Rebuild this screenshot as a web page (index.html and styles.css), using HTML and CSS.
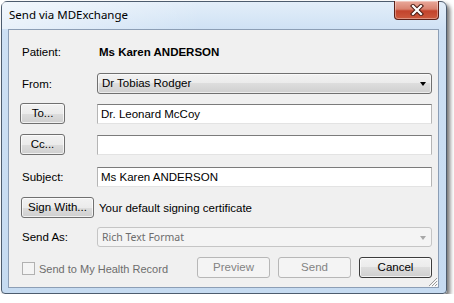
FILE: index.html
```html
<!DOCTYPE html>
<html lang="en">
<head>
  <meta charset="UTF-8">
  <title>Send via MDExchange</title>
  <link rel="stylesheet" href="styles.css">
</head>
<body>
  <div class="window">
    <div class="titlebar">
      <span class="title">Send via MDExchange</span>
      <div class="close">
        <svg width="14" height="12" viewBox="0 0 14 12">
          <path d="M3 2 L11 10 M11 2 L3 10" stroke="#4a1c14" stroke-width="4.2" stroke-linecap="square"/>
          <path d="M3 2 L11 10 M11 2 L3 10" stroke="#fff" stroke-width="2.2" stroke-linecap="square"/>
        </svg>
      </div>
    </div>

    <div class="client">
      <div class="row row-patient">
        <span class="label">Patient:</span>
        <span class="patient">Ms Karen ANDERSON</span>
      </div>

      <div class="row row-from">
        <span class="label">From:</span>
        <div class="combo">Dr Tobias Rodger<span class="arrow"></span></div>
      </div>

      <div class="row row-to">
        <div class="cell"><div class="btn btn-small">To...</div></div>
        <div class="field">Dr. Leonard McCoy</div>
      </div>

      <div class="row row-cc">
        <div class="cell"><div class="btn btn-small">Cc...</div></div>
        <div class="field"></div>
      </div>

      <div class="row row-subject">
        <span class="label">Subject:</span>
        <div class="field">Ms Karen ANDERSON</div>
      </div>

      <div class="row row-sign">
        <div class="cell"><div class="btn btn-sign">Sign With...</div></div>
        <span class="cert">Your default signing certificate</span>
      </div>

      <div class="row row-sendas">
        <span class="label">Send As:</span>
        <div class="combo combo-disabled">Rich Text Format<span class="arrow"></span></div>
      </div>

      <div class="row row-bottom">
        <div class="check">
          <span class="box"></span>
          <span>Send to My Health Record</span>
        </div>
        <div class="actions">
          <div class="btn btn-wide btn-disabled">Preview</div>
          <div class="btn btn-wide btn-disabled">Send</div>
          <div class="btn btn-wide btn-default">Cancel</div>
        </div>
      </div>

      <svg class="grip" width="10" height="10" viewBox="0 0 10 10">
        <path d="M9 1 L1 9 M9 4 L4 9 M9 7 L7 9" stroke="#9a9a9a" stroke-width="1"/>
        <path d="M10 2 L2 10 M10 5 L5 10 M10 8 L8 10" stroke="#fff" stroke-width="1"/>
      </svg>
    </div>
  </div>
</body>
</html>
```

FILE: styles.css
```css
body {
  margin: 0;
  background: #fff;
  font-family: "Liberation Sans", Arial, sans-serif;
  font-size: 11.5px;
  color: #000;
}
.window {
  box-sizing: border-box;
  margin: 1px 0 0 1px;
  width: 446px;
  height: 293px;
  border: 1px solid #4d5c6e;
  border-radius: 6px 6px 4px 4px;
  background: linear-gradient(to bottom, #e3eef9 0px, #cde0f4 30px, #c6dbf1 100%);
  box-shadow: 3px 3px 4px rgba(0,0,0,0.55);
}
.titlebar {
  height: 27px;
  display: flex;
  justify-content: space-between;
  padding: 0 7px 0 7px;
  background: linear-gradient(to right, rgba(255,255,255,0.55), rgba(255,255,255,0) 45%);
}
.title {
  font-family: "Noto Sans", "Open Sans", sans-serif;
  font-size: 11.5px;
  line-height: 24px;
  padding-top: 1px;
}
.close {
  box-sizing: border-box;
  width: 45px;
  height: 19px;
  margin-top: -1px;
  border: 1px solid #5c2018;
  border-top: none;
  border-radius: 0 0 4px 4px;
  background: linear-gradient(to bottom, #e9a99b 0%, #d9826f 45%, #c2432c 55%, #cc5a3e 100%);
  box-shadow: inset 0 0 0 1px rgba(255,255,255,0.35);
  display: flex;
  align-items: center;
  justify-content: center;
}
.client {
  position: relative;
  box-sizing: border-box;
  height: 259px;
  margin: 0 7px 0 6px;
  padding: 11px 6px 0 12px;
  background: #f0f0f0;
  border: 1px solid #8c9eb5;
}
.row {
  display: flex;
  align-items: center;
  height: 21px;
}
.row-from { margin-top: 11px; }
.row-to { margin-top: 9px; }
.row-cc { margin-top: 10px; }
.row-subject { margin-top: 11px; }
.row-sign { margin-top: 10px; }
.row-sendas { margin-top: 8px; }
.row-bottom { margin-top: 10px; }

.label, .cell {
  flex: none;
  width: 76px;
}
.label {
  box-sizing: border-box;
  padding-left: 1px;
}
.patient {
  font-weight: bold;
  padding-left: 2px;
}
.cert {
  padding-left: 2px;
}
.field {
  box-sizing: border-box;
  flex: 1;
  height: 20px;
  line-height: 18px;
  padding-left: 3px;
  background: #fff;
  border: 1px solid;
  border-color: #7b7b7b #b5b5b5 #e3e3e3 #b5b5b5;
}
.combo {
  position: relative;
  box-sizing: border-box;
  flex: 1;
  height: 21px;
  line-height: 19px;
  padding-left: 4px;
  border: 1px solid #707070;
  border-radius: 3px;
  background: linear-gradient(to bottom, #f2f2f2 0%, #ebebeb 50%, #dddddd 50%, #cfcfcf 100%);
  box-shadow: inset 0 0 0 1px rgba(255,255,255,0.6);
}
.combo-disabled {
  height: 20px;
  line-height: 18px;
  font-family: "Noto Sans", sans-serif;
  font-size: 10.5px;
  color: #6d6d6d;
  border-color: #c5c5c5;
  background: #f4f4f4;
  box-shadow: none;
}
.arrow {
  position: absolute;
  right: 5px;
  top: 8px;
  width: 0;
  height: 0;
  border-left: 3.5px solid transparent;
  border-right: 3.5px solid transparent;
  border-top: 4px solid #000;
}
.combo-disabled .arrow {
  top: 8px;
  border-top-color: #a8a8a8;
}
.btn {
  box-sizing: border-box;
  height: 21px;
  line-height: 19px;
  text-align: center;
  border: 1px solid #707070;
  border-radius: 3px;
  background: linear-gradient(to bottom, #f2f2f2 0%, #ebebeb 50%, #dddddd 50%, #cfcfcf 100%);
  box-shadow: inset 0 0 0 1px rgba(255,255,255,0.7);
}
.btn-small {
  width: 45px;
  margin-left: -1px;
}
.btn-sign {
  width: 73px;
}
.btn-wide {
  width: 73px;
}
.btn-disabled {
  color: #838383;
  border-color: #b7b7b7;
  background: #f4f4f4;
  box-shadow: none;
}
.btn-default {
  border-color: #3c3c3c;
}
.row-bottom {
  justify-content: space-between;
}
.check {
  display: flex;
  align-items: center;
  gap: 4px;
  font-size: 11px;
  color: #6d6d6d;
  padding-left: 1px;
  padding-top: 2px;
}
.box {
  box-sizing: border-box;
  width: 13px;
  height: 13px;
  border: 1px solid #b1b1b1;
  background: #f4f4f4;
}
.actions {
  display: flex;
  gap: 8px;
}
.grip {
  position: absolute;
  right: 0;
  bottom: 0;
}
```
